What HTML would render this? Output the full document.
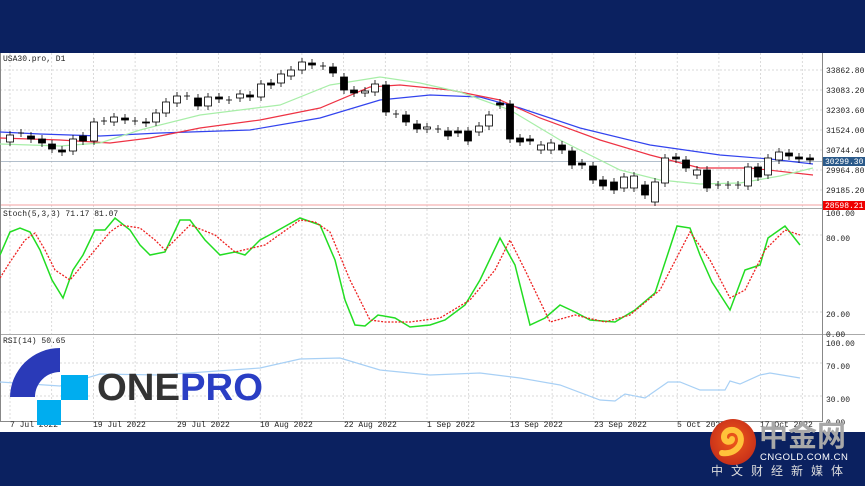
<!DOCTYPE html>
<html><head><meta charset="utf-8"><style>
body{margin:0;width:865px;height:486px;background:#0b2160;overflow:hidden;position:relative;font-family:"Liberation Sans",sans-serif}
#c{position:absolute;left:0;top:53px}
.t{font-family:"Liberation Mono",monospace;font-size:8px;fill:#222}
</style></head><body>
<svg id="c" width="865" height="379" viewBox="0 53 865 379" xmlns="http://www.w3.org/2000/svg">
<rect x="0" y="53" width="865" height="379" fill="#fff"/>
<g id="grid" stroke="#ccc" stroke-dasharray="2,2" stroke-width="0.7"></g>
<line x1="0" y1="161.4" x2="822" y2="161.4" stroke="#9ab" stroke-width="0.8"/>
<line x1="0" y1="205" x2="822" y2="205" stroke="#f3a0a0" stroke-width="1"/>
<line x1="0" y1="208.5" x2="865" y2="208.5" stroke="#aaa"/>
<line x1="0" y1="334.5" x2="865" y2="334.5" stroke="#aaa"/>
<line x1="0" y1="421.5" x2="822" y2="421.5" stroke="#888"/>
<line x1="822.5" y1="53" x2="822.5" y2="422" stroke="#888"/>
<line x1="0.5" y1="53" x2="0.5" y2="422" stroke="#888"/>
<g id="ma" fill="none" stroke-width="1.2"></g>
<g id="cd" stroke="#000" stroke-width="0.8"></g>
<text class="t" x="3" y="61">USA30.pro, D1</text>
<text class="t" x="3" y="216">Stoch(5,3,3) 71.17 81.07</text>
<text class="t" x="3" y="343">RSI(14) 50.65</text>
<g id="ax" class="t"></g>
<rect x="823" y="157" width="42" height="9" fill="#2b5a8a"/>
<text x="825" y="164" font-family="Liberation Mono,monospace" font-size="8" fill="#fff">30299.30</text>
<rect x="823" y="201" width="42" height="9" fill="#e00"/>
<text x="825" y="208" font-family="Liberation Mono,monospace" font-size="8" fill="#fff">28598.21</text>
</svg>

<svg style="position:absolute;left:0;top:340px" width="280" height="90">
<path d="M10 57 A50 50 0 0 1 60 8 L60 32 A25 25 0 0 0 35 57 Z" fill="#2a3ab8"/>
<rect x="61" y="35" width="27" height="25" fill="#00adef"/>
<rect x="37" y="60" width="24" height="25" fill="#00adef"/>
<text x="97" y="60" font-family="Liberation Sans,sans-serif" font-weight="bold" font-size="38" fill="#333" textLength="166" lengthAdjust="spacingAndGlyphs">ONE<tspan fill="#2a3ec4">PRO</tspan></text>
</svg>

<svg style="position:absolute;left:700px;top:415px" width="165" height="71">
<defs><radialGradient id="g" cx="50%" cy="45%" r="55%"><stop offset="0" stop-color="#f05a1a"/><stop offset="1" stop-color="#c8301a"/></radialGradient></defs>
<circle cx="33" cy="27" r="23" fill="url(#g)"/>
<path d="M22 38 C34 40 44 30 40 20 C36 12 24 14 24 22 C24 28 32 28 32 24" fill="none" stroke="#ffc23a" stroke-width="6" stroke-linecap="round"/>
<text x="59" y="31" font-family="Noto Sans CJK SC,sans-serif" font-weight="bold" font-size="29" fill="#a8a8a8">中金网</text>
<text x="60" y="45" font-family="Liberation Sans,sans-serif" font-size="9.5" fill="#fff" letter-spacing="0.5">CNGOLD.COM.CN</text>
<text x="11" y="60" font-family="Noto Sans CJK SC,sans-serif" font-size="12" fill="#ddd" letter-spacing="8">中文财经新媒体</text>
</svg>

<script>
var NS="http://www.w3.org/2000/svg";
function el(p,t,a){var e=document.createElementNS(NS,t);for(var k in a)e.setAttribute(k,a[k]);p.appendChild(e);return e}
var grid=document.getElementById('grid');
for(var x=10;x<822;x+=41.7)el(grid,'line',{x1:x,y1:53,x2:x,y2:421});
[70,90,110,130,150,170,190,235,312,363,396].forEach(function(y){el(grid,'line',{x1:0,y1:y,x2:822,y2:y})});
var ax=document.getElementById('ax');
[["33862.80",70],["33083.20",90],["32303.60",110],["31524.00",130],["30744.40",150],["29964.80",170],["29185.20",190],["100.00",213],["80.00",238],["20.00",314],["0.00",334],["100.00",343],["70.00",366],["30.00",399],["0.00",422]].forEach(function(a){var t=el(ax,'text',{x:826,y:a[1]+3});t.textContent=a[0]});
[["7 Jul 2022",10],["19 Jul 2022",93],["29 Jul 2022",177],["10 Aug 2022",260],["22 Aug 2022",344],["1 Sep 2022",427],["13 Sep 2022",510],["23 Sep 2022",594],["5 Oct 2022",677],["17 Oct 2022",760]].forEach(function(a){var t=el(ax,'text',{x:a[1],y:427});t.textContent=a[0]});
var ma=document.getElementById('ma');
function pl(pts,c,extra){var a={points:pts,stroke:c};for(var k in extra)a[k]=extra[k];el(ma,'polyline',a)}
pl("0,132 40,134 100,136 160,133 250,130 320,118 380,100 430,95 480,97 520,108 580,128 650,145 720,155 770,159 813,164","#3344ee");
pl("0,138 60,140 110,143 150,138 200,128 260,120 320,108 370,87 400,85 450,90 500,100 540,118 600,140 650,155 700,168 750,168 813,175","#ee3344");
pl("0,144 60,146 100,143 140,130 200,115 280,105 330,85 380,77 420,83 460,92 510,110 560,140 620,170 660,180 700,184 740,183 780,176 813,168","#a8eea8");
pl("0,255 10,232 20,228 30,232 40,250 52,280 63,298 73,270 83,255 95,230 105,230 115,218 130,230 140,245 150,255 165,252 180,220 190,220 205,240 220,255 235,252 245,255 260,240 275,232 300,218 320,225 335,260 345,300 355,325 365,326 378,315 395,318 410,327 430,325 445,320 465,305 480,280 500,238 515,265 530,325 545,318 560,305 575,312 590,320 615,322 635,310 655,293 677,226 690,228 700,255 712,282 730,310 745,270 760,265 768,238 785,226 800,245","#22dd22",{"stroke-width":1.5});
pl("0,278 10,262 25,240 35,233 45,250 55,270 70,280 85,262 95,250 110,232 120,225 140,228 155,240 165,250 190,225 215,235 235,252 265,245 300,220 315,222 330,232 350,280 370,320 385,322 410,322 440,318 470,300 495,270 510,240 525,270 550,322 575,315 605,322 630,315 660,290 690,232 710,260 730,298 745,290 765,250 785,230 800,235","#ee2222",{"stroke-dasharray":"2,1.5","stroke-width":1.3});
pl("0,382 60,386 100,374 160,375 260,368 300,359 340,358 380,370 430,375 480,373 520,378 560,385 600,400 615,401 625,394 645,398 668,382 680,382 700,390 725,390 730,381 740,384 760,375 770,373 800,378","#a8d0f5");
var C=[[10,'w',135,142],[21,'x',133],[31,'b',136,139],[42,'b',139,143],[52,'b',144,149],[62,'b',150,152],[73,'w',139,151],[83,'b',136,141],[94,'w',122,141],[104,'x',121],[114,'w',117,122],[125,'b',118,120],[135,'x',121],[146,'b',122,123],[156,'w',113,122],[166,'w',102,113],[177,'w',96,103],[187,'x',96],[198,'b',98,106],[208,'w',97,106],[219,'b',97,99],[229,'x',100],[240,'w',94,98],[250,'b',95,97],[261,'w',84,97],[271,'b',83,85],[281,'w',74,83],[291,'w',70,76],[302,'w',62,70],[312,'b',63,65],[323,'x',66],[333,'b',67,73],[344,'b',77,90],[354,'b',90,93],[365,'w',91,93],[375,'w',84,92],[386,'b',85,112],[396,'x',114],[406,'b',115,122],[417,'b',124,129],[427,'w',127,129],[438,'x',129],[448,'b',131,136],[458,'b',131,133],[468,'b',131,141],[479,'w',126,132],[489,'w',115,126],[500,'b',103,105],[510,'b',104,139],[520,'b',138,142],[530,'b',139,141],[541,'w',145,150],[551,'w',143,150],[562,'b',145,150],[572,'b',151,165],[582,'b',163,165],[593,'b',166,180],[603,'b',180,186],[614,'b',182,190],[624,'w',177,188],[634,'w',176,188],[645,'b',185,195],[655,'w',182,202],[665,'w',158,183],[676,'b',157,159],[686,'b',160,168],[697,'w',170,175],[707,'b',170,188],[718,'x',185],[728,'x',185],[738,'x',185],[748,'w',167,186],[758,'b',167,177],[768,'w',158,175],[779,'w',152,160],[789,'b',153,156],[799,'b',157,159],[810,'b',158,160]];
var cd=document.getElementById('cd');
C.forEach(function(c){var x=c[0];if(c[1]=='x'){el(cd,'line',{x1:x-3,y1:c[2],x2:x+3,y2:c[2]});el(cd,'line',{x1:x,y1:c[2]-4,x2:x,y2:c[2]+4});return}
var t=c[2],b=c[3];el(cd,'line',{x1:x,y1:t-4,x2:x,y2:b+4});el(cd,'rect',{x:x-3.5,y:t,width:7,height:Math.max(b-t,1),fill:c[1]=='b'?'#000':'#fff'})});
</script>
</body></html>
